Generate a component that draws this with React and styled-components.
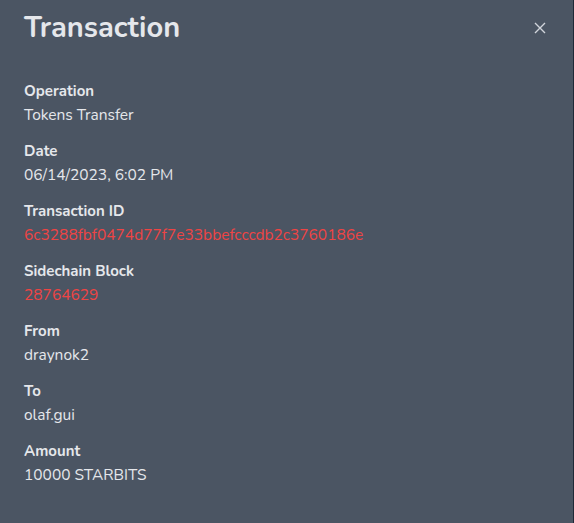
import React from 'react';
import styled, { createGlobalStyle } from 'styled-components';

const GlobalStyle = createGlobalStyle`
  html, body {
    margin: 0;
    padding: 0;
    background-color: #1f2937;
  }
`;

const Panel = styled.div`
  box-sizing: border-box;
  width: 573px;
  height: 523px;
  padding: 7px 24px 0 24px;

  background-color: #4b5563;
  font-family: 'Nunito', 'Lato', 'Noto Sans', sans-serif;
`;

const Header = styled.div`
  display: flex;
  align-items: center;
  justify-content: space-between;
  height: 40px;
  margin-bottom: 32px;
`;

const Title = styled.h2`
  margin: 0;
  color: #e5e7eb;
  font-size: 29px;
  font-weight: 700;
`;

const CloseButton = styled.button`
  display: flex;
  align-items: center;
  justify-content: center;
  width: 24px;
  height: 24px;
  margin-right: -3px;
  margin-top: 2px;
  padding: 0;

  border: none;
  background: none;
  color: #d1d5db;
  cursor: pointer;
`;

const List = styled.dl`
  display: flex;
  flex-direction: column;
  gap: 12px;
  margin: 0;
`;

const Field = styled.div`
  display: flex;
  flex-direction: column;
`;

const Label = styled.dt`
  color: #e5e7eb;
  font-size: 15px;
  font-weight: 700;
  line-height: 24px;
`;

const Value = styled.dd`
  margin: 0;
  color: ${(p) => (p.$link ? '#ef4444' : '#e5e7eb')};
  font-size: 15.5px;
  line-height: 24px;
`;

const fields = [
  { label: 'Operation', value: 'Tokens Transfer' },
  { label: 'Date', value: '06/14/2023, 6:02 PM' },
  { label: 'Transaction ID', value: '6c3288fbf0474d77f7e33bbefcccdb2c3760186e', link: true },
  { label: 'Sidechain Block', value: '28764629', link: true },
  { label: 'From', value: 'draynok2' },
  { label: 'To', value: 'olaf.gui' },
  { label: 'Amount', value: '10000 STARBITS' },
];

function App() {
  return (
    <>
      <GlobalStyle />
      <Panel>
        <Header>
          <Title>Transaction</Title>
          <CloseButton aria-label="Close">
            <svg width="12" height="12" viewBox="0 0 12 12" fill="none">
              <path d="M1 1L11 11M11 1L1 11" stroke="currentColor" strokeWidth="1.4" />
            </svg>
          </CloseButton>
        </Header>
        <List>
          {fields.map((f) => (
            <Field key={f.label}>
              <Label>{f.label}</Label>
              <Value $link={f.link}>{f.value}</Value>
            </Field>
          ))}
        </List>
      </Panel>
    </>
  );
}

export default App;
